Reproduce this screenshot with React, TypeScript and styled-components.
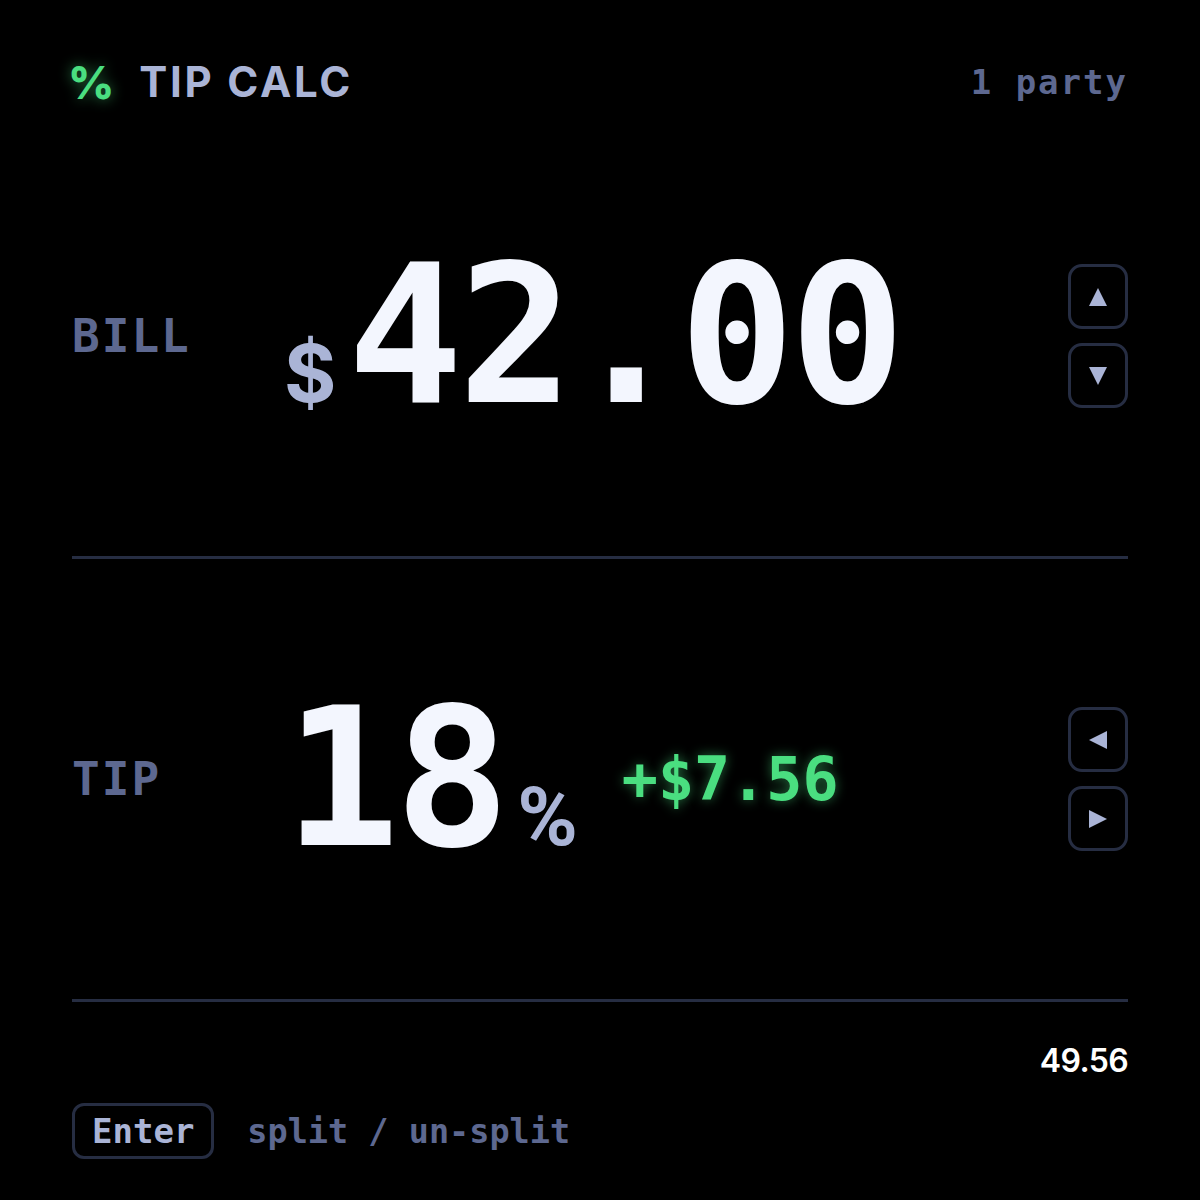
import React from 'react'
import styled, { createGlobalStyle } from 'styled-components'

const mono = `'DejaVu Sans Mono', 'Liberation Mono', monospace`
const sans = `Inter, 'Liberation Sans', sans-serif`

const GlobalStyle = createGlobalStyle`
    html, body {
        margin: 0;
        padding: 0;
        background: #000;
    }
    * {
        box-sizing: border-box;
    }
`

const Root = styled.div`
    width: 1200px;
    height: 1200px;
    background: #000;
    padding: 48px 72px 41px;
    display: flex;
    flex-direction: column;
    color: #f3f6fe;
`

const Header = styled.header`
    height: 68px;
    flex: none;
    display: flex;
    align-items: center;
    justify-content: space-between;
`

const Brand = styled.div`
    display: flex;
    align-items: center;
    gap: 25px;
`

const BrandMark = styled.span`
    margin-left: -4px;
    font-family: ${sans};
    font-weight: 800;
    font-size: 45px;
    line-height: 1;
    color: #4ade80;
    text-shadow: 0 0 14px rgba(74, 222, 128, 0.55);
`

const BrandName = styled.h1`
    margin: 0;
    font-family: ${sans};
    font-weight: 700;
    font-size: 42px;
    line-height: 1;
    letter-spacing: 0.065em;
    color: #aab4d6;
`

const Party = styled.div`
    font-family: ${mono};
    font-weight: 700;
    font-size: 34px;
    letter-spacing: 2px;
    color: #5d6890;
`

const Section = styled.section`
    flex: 1;
    display: grid;
    grid-template-columns: 212px 1fr 60px;
    align-items: center;
`

const Label = styled.div`
    font-family: ${mono};
    font-weight: 700;
    font-size: 46px;
    letter-spacing: 2px;
    color: #5d6890;
`

const Value = styled.div`
    display: flex;
    align-items: center;
`

const Figure = styled.div`
    display: flex;
    align-items: baseline;
`

const Unit = styled.span<{ $after?: boolean }>`
    font-family: ${(p) => (p.$after ? `Roboto, ${sans}` : sans)};
    font-weight: 700;
    font-size: ${(p) => (p.$after ? '82px' : '80px')};
    line-height: 1;
    color: #aab4d6;
    margin: ${(p) => (p.$after ? '0 0 0 12px' : '0 11px 0 0')};
`

const Big = styled.span`
    font-family: ${mono};
    font-weight: 700;
    font-size: 192px;
    line-height: 1;
    letter-spacing: -5px;
    color: #f3f6fe;
`

const Delta = styled.span`
    margin-left: 44px;
    font-family: ${mono};
    font-weight: 700;
    font-size: 60px;
    line-height: 1;
    color: #4ade80;
    text-shadow: 0 0 12px rgba(74, 222, 128, 0.5);
`

const Stepper = styled.div`
    display: flex;
    flex-direction: column;
    gap: 14px;
`

const StepButton = styled.button`
    width: 60px;
    height: 65px;
    padding: 0;
    border: 3px solid #262d42;
    border-radius: 14px;
    background: transparent;
    color: #aab4d6;
    display: flex;
    align-items: center;
    justify-content: center;
`

const Divider = styled.hr`
    flex: none;
    margin: 0;
    border: 0;
    height: 3px;
    background: #262d42;
`

const Total = styled.div`
    flex: none;
    padding-top: 39px;
    text-align: right;
    font-family: ${sans};
    font-weight: 600;
    font-size: 32px;
    line-height: 40px;
    letter-spacing: -0.02em;
    color: #fff;
`

const Footer = styled.div`
    flex: none;
    margin-top: 22px;
    display: flex;
    align-items: center;
    gap: 33px;
`

const Kbd = styled.kbd`
    height: 56px;
    padding: 0 17px;
    border: 3px solid #262d42;
    border-radius: 12px;
    display: inline-flex;
    align-items: center;
    font-family: ${mono};
    font-weight: 700;
    font-size: 34px;
    color: #aab4d6;
`

const Hint = styled.span`
    font-family: ${mono};
    font-weight: 700;
    font-size: 33.5px;
    color: #5d6890;
`

const arrows = {
    up: '10,1 19,19 1,19',
    down: '1,1 19,1 10,19',
    left: '19,1 19,19 1,10',
    right: '1,1 1,19 19,10',
}

function Arrow({ dir }: { dir: keyof typeof arrows }) {
    return (
        <svg width="20" height="20" viewBox="0 0 20 20">
            <polygon points={arrows[dir]} fill="currentColor" />
        </svg>
    )
}

export default function App() {
    return (
        <>
            <GlobalStyle />
            <Root>
                <Header>
                    <Brand>
                        <BrandMark>%</BrandMark>
                        <BrandName>TIP CALC</BrandName>
                    </Brand>
                    <Party>1 party</Party>
                </Header>

                <Section>
                    <Label>BILL</Label>
                    <Value>
                        <Figure>
                            <Unit>$</Unit>
                            <Big>42.00</Big>
                        </Figure>
                    </Value>
                    <Stepper>
                        <StepButton aria-label="increase bill">
                            <Arrow dir="up" />
                        </StepButton>
                        <StepButton aria-label="decrease bill">
                            <Arrow dir="down" />
                        </StepButton>
                    </Stepper>
                </Section>

                <Divider />

                <Section>
                    <Label>TIP</Label>
                    <Value>
                        <Figure>
                            <Big>18</Big>
                            <Unit $after>%</Unit>
                        </Figure>
                        <Delta>+$7.56</Delta>
                    </Value>
                    <Stepper>
                        <StepButton aria-label="lower tip">
                            <Arrow dir="left" />
                        </StepButton>
                        <StepButton aria-label="raise tip">
                            <Arrow dir="right" />
                        </StepButton>
                    </Stepper>
                </Section>

                <Divider />

                <Total>49.56</Total>
                <Footer>
                    <Kbd>Enter</Kbd>
                    <Hint>split / un-split</Hint>
                </Footer>
            </Root>
        </>
    )
}
